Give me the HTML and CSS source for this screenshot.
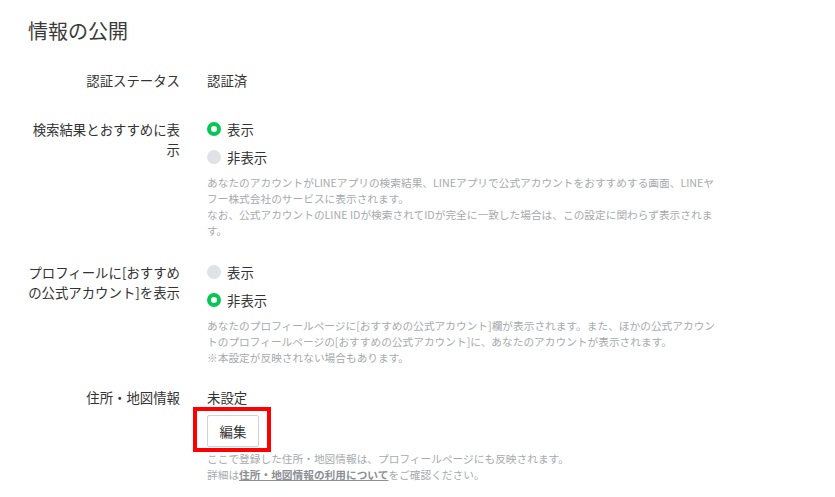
FILE: index.html
```html
<!DOCTYPE html>
<html lang="ja">
<head>
<meta charset="utf-8">
<link rel="stylesheet" href="styles.css">
</head>
<body>
<div class="page">
  <h1 class="title">情報の公開</h1>
  <div class="form">
    <div class="row row-first">
      <div class="label">認証ステータス</div>
      <div class="value"><div class="text">認証済</div></div>
    </div>
    <div class="row">
      <div class="label">検索結果とおすすめに表示</div>
      <div class="value">
        <div class="radio checked"><span class="dot"></span><span>表示</span></div>
        <div class="radio"><span class="dot"></span><span>非表示</span></div>
        <p class="desc">あなたのアカウントがLINEアプリの検索結果、LINEアプリで公式アカウントをおすすめする画面、LINEヤ<br>フー株式会社のサービスに表示されます。<br>なお、公式アカウントのLINE IDが検索されてIDが完全に一致した場合は、この設定に関わらず表示されま<br>す。</p>
      </div>
    </div>
    <div class="row">
      <div class="label">プロフィールに[おすすめの公式アカウント]を表示</div>
      <div class="value">
        <div class="radio"><span class="dot"></span><span>表示</span></div>
        <div class="radio checked"><span class="dot"></span><span>非表示</span></div>
        <p class="desc">あなたのプロフィールページに[おすすめの公式アカウント]欄が表示されます。また、ほかの公式アカウン<br>トのプロフィールページの[おすすめの公式アカウント]に、あなたのアカウントが表示されます。<br>※本設定が反映されない場合もあります。</p>
      </div>
    </div>
    <div class="row">
      <div class="label">住所・地図情報</div>
      <div class="value">
        <div class="text">未設定</div>
        <div class="btn-wrap">
          <button class="btn" type="button">編集</button>
          <span class="highlight"></span>
        </div>
        <p class="desc desc-tight">ここで登録した住所・地図情報は、プロフィールページにも反映されます。<br>詳細は<a class="link" href="#">住所・地図情報の利用について</a>をご確認ください。</p>
      </div>
    </div>
  </div>
</div>
</body>
</html>
```

FILE: styles.css
```css
* { box-sizing: border-box; }
html, body {
  margin: 0;
  padding: 0;
  background: #ffffff;
}
body {
  font-family: "Noto Sans CJK JP", "Noto Sans", sans-serif;
  color: #333333;
}
.page {
  padding: 17px 0 0 28px;
}
.title {
  margin: 0;
  font-size: 20px;
  line-height: 28px;
  font-weight: 400;
  color: #3a3a3a;
}
.form {
  display: flex;
  flex-direction: column;
  margin-left: -2px;
}
.row {
  display: grid;
  grid-template-columns: 154px 580px;
  column-gap: 27px;
  margin-top: 23px;
}
.row-first {
  margin-top: 25px;
}
.row + .row:nth-child(2) {
  margin-top: 29px;
}
.row:nth-child(4) {
  margin-top: 21px;
}
.label {
  text-align: right;
  font-size: 13.4px;
  line-height: 20px;
  color: #333333;
}
.value {
  display: flex;
  flex-direction: column;
  align-items: flex-start;
}
.text {
  font-size: 13.4px;
  line-height: 20px;
  color: #333333;
}
.radio {
  display: flex;
  align-items: center;
  gap: 6px;
  font-size: 13.4px;
  line-height: 20px;
  color: #333333;
}
.radio + .radio {
  margin-top: 8px;
}
.dot {
  width: 14px;
  height: 14px;
  border-radius: 50%;
  background: #dfe2e6;
  position: relative;
  flex: none;
}
.radio.checked .dot {
  background: #06c755;
}
.radio.checked .dot::after {
  content: "";
  position: absolute;
  left: 4px;
  top: 4px;
  width: 6px;
  height: 6px;
  border-radius: 50%;
  background: #ffffff;
}
.desc {
  margin: 8px 0 0;
  font-size: 10.7px;
  line-height: 16px;
  color: #a6aaae;
  white-space: nowrap;
}
.desc-tight {
  margin-top: 4px;
}
.link {
  color: #8c9096;
  font-weight: 700;
  text-decoration: underline;
}
.btn-wrap {
  position: relative;
  margin-top: 8px;
}
.btn {
  display: block;
  width: 52px;
  height: 32px;
  padding: 0;
  border: 1px solid #cfd2d6;
  border-radius: 2px;
  background: #ffffff;
  font-family: inherit;
  font-size: 13.4px;
  color: #333333;
}
.highlight {
  position: absolute;
  left: -14px;
  top: -8px;
  width: 78px;
  height: 45px;
  border: 4px solid #ff0000;
  pointer-events: none;
}
```
